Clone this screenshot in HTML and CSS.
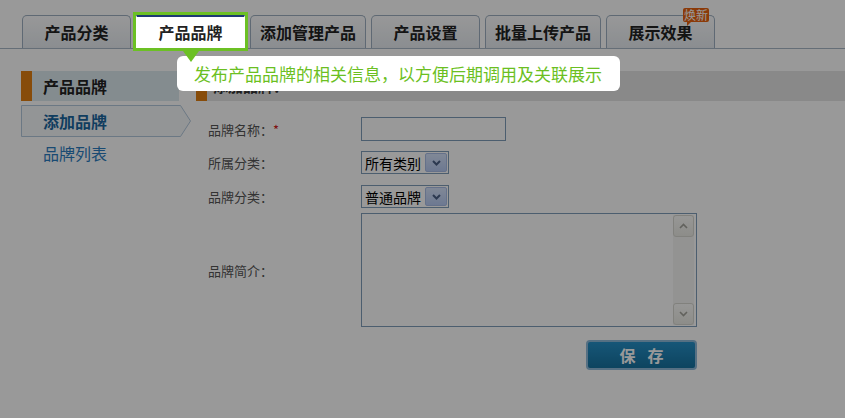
FILE: index.html
```html
<!DOCTYPE html>
<html lang="zh-CN">
<head>
    <meta charset="UTF-8">
    <meta name="viewport" content="width=device-width, initial-scale=1.0">
    <title>产品品牌</title>
    <link rel="stylesheet" href="styles.css">
</head>
<body>
    <div class="tabs">
        <a class="tab">产品分类</a>
        <a class="tab active">产品品牌
            <span class="tip-arrow"></span>
            <span class="tip">发布产品品牌的相关信息，以方便后期调用及关联展示</span>
        </a>
        <a class="tab wide">添加管理产品</a>
        <a class="tab">产品设置</a>
        <a class="tab wide">批量上传产品</a>
        <a class="tab">展示效果<span class="badge">焕新</span></a>
    </div>

    <div class="main">
        <div class="side">
            <div class="side-title">产品品牌</div>
            <a class="side-item current">
                <svg class="item-bg" width="170" height="32" viewBox="0 0 170 32">
                    <polygon points="0.5,0.5 159.5,0.5 169.5,16 159.5,31.5 0.5,31.5" fill="#f6f9fb" stroke="#b3c8dc"/>
                </svg>
                <span>添加品牌</span>
            </a>
            <a class="side-item">品牌列表</a>
        </div>

        <div class="content">
            <div class="content-title">添加品牌：</div>
            <div class="form">
                <div class="row r1">
                    <label>品牌名称：<em>*</em></label>
                    <div class="text"></div>
                </div>
                <div class="row r2">
                    <label>所属分类：</label>
                    <div class="select">
                        <span>所有类别</span>
                        <i class="drop"><svg width="9" height="6" viewBox="0 0 9 6"><path d="M1 1l3.5 3.5L8 1" fill="none" stroke="#4a5f86" stroke-width="2"/></svg></i>
                    </div>
                </div>
                <div class="row r3">
                    <label>品牌分类：</label>
                    <div class="select">
                        <span>普通品牌</span>
                        <i class="drop"><svg width="9" height="6" viewBox="0 0 9 6"><path d="M1 1l3.5 3.5L8 1" fill="none" stroke="#4a5f86" stroke-width="2"/></svg></i>
                    </div>
                </div>
                <div class="row r4">
                    <label>品牌简介：</label>
                    <div class="area">
                        <div class="scroll">
                            <b><svg width="9" height="6" viewBox="0 0 9 6"><path d="M1 5l3.5-3.5L8 5" fill="none" stroke="#a3a39c" stroke-width="1.6"/></svg></b>
                            <b><svg width="9" height="6" viewBox="0 0 9 6"><path d="M1 1l3.5 3.5L8 1" fill="none" stroke="#a3a39c" stroke-width="1.6"/></svg></b>
                        </div>
                    </div>
                </div>
                <div class="actions">
                    <button class="save">保存</button>
                </div>
            </div>
        </div>
    </div>

    <div class="mask"></div>
</body>
</html>
```

FILE: styles.css
```css
body {
    margin: 0;
    font-family: "Noto Sans CJK SC", "Liberation Sans", sans-serif;
    background: #fff;
    color: #333;
}
.tabs {
    display: flex;
    align-items: flex-end;
    gap: 5px;
    padding: 15px 0 0 22px;
    border-bottom: 1px solid #a8b7c6;
}
.tab {
    position: relative;
    box-sizing: border-box;
    width: 109px;
    height: 33px;
    line-height: 32px;
    border: 1px solid #9fb0c1;
    border-bottom: 0;
    border-radius: 5px 5px 0 0;
    background: linear-gradient(#fdfdfe, #e7ecf1);
    text-align: center;
    font-size: 16px;
    font-weight: bold;
    color: #222;
}
.tab.wide { width: 116px; }
.tab.active {
    z-index: 11;
    background: #fff;
    border-color: #fff;
    border-top: 2px solid #1d3a73;
    border-radius: 0;
    line-height: 30px;
    outline: 3px solid #6cc024;
}
.tip-arrow {
    position: absolute;
    left: 46px;
    top: 34px;
    z-index: 2;
    width: 0;
    height: 0;
    border-left: 8px solid transparent;
    border-right: 8px solid transparent;
    border-top: 11px solid #6cc024;
}
.tip {
    position: absolute;
    left: 40px;
    top: 39px;
    box-sizing: border-box;
    width: 443px;
    height: 35px;
    padding-left: 17px;
    background: #fff;
    border-radius: 6px;
    color: #6bbf22;
    font-size: 17px;
    font-weight: normal;
    line-height: 35px;
    text-align: left;
    white-space: nowrap;
}
.badge {
    position: absolute;
    left: 76px;
    top: -8px;
    width: 26px;
    height: 14px;
    background: #e8620f;
    border-radius: 2px;
    color: #fff;
    font-size: 12px;
    font-weight: normal;
    line-height: 14px;
}
.badge::after {
    content: "";
    position: absolute;
    left: 4px;
    top: 14px;
    border-left: 4px solid #e8620f;
    border-bottom: 4px solid transparent;
}

.main {
    display: flex;
    margin-top: 22px;
}
.side {
    width: 169px;
    margin-left: 21px;
}
.side-title {
    box-sizing: border-box;
    width: 158px;
    height: 30px;
    padding-left: 11px;
    border-left: 11px solid #e27f12;
    background: #dde9ef;
    line-height: 30px;
    font-size: 16px;
    font-weight: bold;
    color: #222;
}
.side-item {
    position: relative;
    display: block;
    height: 32px;
    padding-left: 22px;
    line-height: 32px;
    font-size: 16px;
    color: #2b7cc0;
}
.side-item.current {
    margin-top: 4px;
    font-weight: bold;
    color: #1c679f;
}
.item-bg {
    position: absolute;
    left: 0;
    top: 0;
}
.side-item span { position: relative; }

.content {
    flex: 1;
    margin-left: 6px;
}
.content-title {
    height: 30px;
    padding-left: 6px;
    border-left: 11px solid #e27f12;
    background: #e5e5e5;
    line-height: 30px;
    font-size: 15px;
    font-weight: bold;
    color: #333;
}
.form { padding: 16px 0 0 12px; }
.row {
    display: flex;
    align-items: center;
}
.row label {
    width: 153px;
    font-size: 13px;
    color: #555;
}
.row em {
    font-style: normal;
    color: #d42020;
}
.r1 { margin-bottom: 10px; }
.r2 { margin-bottom: 11px; }
.r3 { margin-bottom: 5px; }
.r4 { margin-bottom: 13px; }
.text {
    box-sizing: border-box;
    width: 145px;
    height: 24px;
    border: 1px solid #7f9db9;
    background: #fff;
}
.select {
    box-sizing: border-box;
    display: flex;
    align-items: center;
    justify-content: space-between;
    width: 88px;
    height: 23px;
    padding: 1px;
    border: 1px solid #7f9db9;
    background: #fff;
    font-size: 14px;
    color: #000;
}
.select span { padding-left: 2px; }
.drop {
    box-sizing: border-box;
    display: flex;
    align-items: center;
    justify-content: center;
    width: 22px;
    height: 19px;
    border: 1px solid #a9bde6;
    border-radius: 2px;
    background: linear-gradient(#d6e3fb, #b6caf2);
}
.area {
    box-sizing: border-box;
    display: flex;
    justify-content: flex-end;
    width: 336px;
    height: 114px;
    padding: 1px 2px 1px 0;
    border: 1px solid #7f9db9;
    background: #fff;
}
.scroll {
    display: flex;
    flex-direction: column;
    justify-content: space-between;
    width: 21px;
    background: #f6f6f3;
}
.scroll b {
    box-sizing: border-box;
    display: flex;
    align-items: center;
    justify-content: center;
    height: 22px;
    border: 1px solid #d8d8d1;
    border-radius: 3px;
    background: linear-gradient(#fcfcfa, #ebebe5);
}
.actions {
    display: flex;
    justify-content: flex-end;
    width: 336px;
    margin-left: 153px;
}
.save {
    width: 111px;
    height: 30px;
    padding: 0 0 0 12px;
    border: 2px solid #8fbbdb;
    border-radius: 4px;
    background: linear-gradient(#2690c8, #16729f);
    color: #fff;
    font-family: inherit;
    font-size: 16px;
    font-weight: bold;
    letter-spacing: 12px;
}

.mask {
    position: fixed;
    inset: 0;
    z-index: 10;
    background: rgba(0, 0, 0, 0.4);
}
```
